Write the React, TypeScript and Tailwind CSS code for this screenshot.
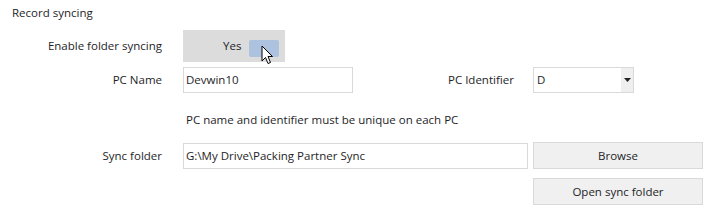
export default function App() {
  return (
    <div className="h-[215px] w-[712px] bg-white text-[11.5px] text-[#1e1e28] font-['Open_Sans','Noto_Sans',sans-serif]">
      <div className="pl-[12px] pt-[4px] leading-[18px]">Record syncing</div>

      {/* enable toggle */}
      <div className="mt-[8px] flex h-[32px] items-center">
        <div className="w-[162px] text-right">Enable folder syncing</div>
        <div className="relative ml-[21px] flex h-[32px] w-[102px] items-center bg-[#dcdcdc]">
          <span className="ml-[40px]">Yes</span>
          <div className="absolute left-[66px] top-[10px] h-[17px] w-[30px] rounded-[2px] bg-[#adc2de]" />
          <svg
            className="absolute left-[78px] top-[15px]"
            width="13"
            height="20"
            viewBox="0 0 13 20"
          >
            <path
              d="M1 1 L1 16 L4.5 12.5 L7 18.5 L9.5 17.5 L7 11.5 L11.5 11.5 Z"
              fill="#ffffff"
              stroke="#000000"
              strokeWidth="1"
              strokeLinejoin="round"
            />
          </svg>
        </div>
      </div>

      {/* name + identifier */}
      <div className="mt-[5px] flex h-[26px] items-center">
        <div className="w-[162px] text-right">PC Name</div>
        <div className="ml-[21px] flex h-[26px] w-[170px] items-center border border-[#d9d9d9] px-[2px]">
          Devwin10
        </div>
        <div className="ml-[95px] w-[85px]">PC Identifier</div>
        <div className="flex h-[26px] w-[101px] items-center justify-between border border-[#d9d9d9] pl-[3px]">
          <span>D</span>
          <div className="flex h-full w-[12px] items-center justify-center bg-[#efefef]">
            <svg width="7" height="4" viewBox="0 0 7 4">
              <path d="M0 0 L7 0 L3.5 4 Z" fill="#222" />
            </svg>
          </div>
        </div>
      </div>

      <div className="mt-[19px] pl-[186px] leading-[16px]">
        PC name and identifier must be unique on each PC
      </div>

      {/* sync folder */}
      <div className="mt-[14px] flex h-[27px] items-center">
        <div className="w-[162px] text-right">Sync folder</div>
        <div className="ml-[21px] flex h-[26px] w-[345px] items-center border border-[#d9d9d9] px-[2px]">
          G:\My Drive\Packing Partner Sync
        </div>
        <button className="ml-[5px] h-[27px] w-[170px] border border-[#d9d9d9] bg-[#f0f0f0]">
          Browse
        </button>
      </div>

      <div className="mt-[9px] flex">
        <button className="ml-[533px] h-[27px] w-[170px] border border-[#d9d9d9] bg-[#f0f0f0]">
          Open sync folder
        </button>
      </div>
    </div>
  );
}
